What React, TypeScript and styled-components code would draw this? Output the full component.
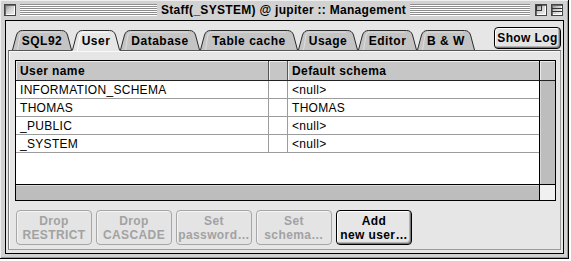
import React from "react";
import styled, { createGlobalStyle } from "styled-components";

const Global = createGlobalStyle`
  html, body { margin: 0; padding: 0; background: #ffffff; }
  body { width: 571px; height: 261px; overflow: hidden; }
  *, *::before, *::after { box-sizing: border-box; }
`;

const UI = `"Liberation Sans", Arial, sans-serif`;

const Window = styled.div`
  width: 569px;
  height: 259px;
  background: #d2d2d2;
  border-right: 1px solid #000;
  border-bottom: 1px solid #000;
  box-shadow: inset 1px 1px 0 #eeeeee, inset -1px -1px 0 #9a9a9a;
  display: flex;
  flex-direction: column;
  padding: 0 4px 4px 5px;
`;

const TitleBar = styled.div`
  height: 20px;
  margin-left: -5px;
  margin-right: -4px;
  padding: 0 5px 0 4px;
  display: grid;
  grid-template-columns: 1fr auto 1fr;
  align-items: center;
  font: bold 12px ${UI};
  letter-spacing: 0.3px;
  color: #000;
`;

const TitleSide = styled.div`
  display: flex;
  align-items: center;
  gap: 4px;
`;

const Stripes = styled.div`
  flex: 1;
  height: 12px;
  background: repeating-linear-gradient(
    to bottom,
    #8e8e8e 0px,
    #8e8e8e 1px,
    #ffffff 1px,
    #ffffff 2px
  );
`;

const TitleText = styled.div`
  padding: 0 4px;
  white-space: nowrap;
`;

const WinBox = styled.div`
  width: 12px;
  height: 12px;
  border: 1px solid #444;
  background: linear-gradient(135deg, #8a8a8a 0%, #cfcfcf 45%, #f4f4f4 100%);
  box-shadow: inset 1px 1px 0 #6a6a6a, inset -1px -1px 0 #fff;
  position: relative;
  flex: none;
`;

const BoxGlyph = styled.svg`
  position: absolute;
  left: 0;
  top: 0;
`;

const Content = styled.div`
  flex: 1;
  border: 1px solid #000;
  background: #e6e6e6;
  display: flex;
  flex-direction: column;
`;

const TabBar = styled.div`
  height: 29px;
  display: flex;
  align-items: flex-end;
  padding-left: 6px;
  padding-right: 2px;
`;

const Tabs = styled.div`
  display: flex;
  align-items: flex-end;
  flex: 1;
`;

const TabItem = styled.div<{ $w: number; $active?: boolean }>`
  position: relative;
  width: ${(p) => p.$w}px;
  height: ${(p) => (p.$active ? 22 : 21)}px;
  margin-bottom: ${(p) => (p.$active ? -1 : 0)}px;
  z-index: ${(p) => (p.$active ? 3 : 1)};
  display: flex;
  justify-content: center;
  padding-top: 6px;
  font: bold 12px ${UI};
  letter-spacing: 0.5px;
  color: #000;
  white-space: nowrap;
`;

const TabSvg = styled.svg`
  position: absolute;
  left: 0;
  top: 0;
  overflow: visible;
`;

const TabLabel = styled.span`
  position: relative;
  line-height: 13px;
`;

const ShowLog = styled.button`
  align-self: flex-start;
  margin-top: 6px;
  width: 67px;
  height: 22px;
  border: 1px solid #000;
  border-radius: 4px;
  background: #e4e4e4;
  box-shadow: inset 1px 1px 0 #fff, inset -1px -1px 0 #777, inset -2px -2px 0 #b4b4b4;
  font: bold 12px ${UI};
  letter-spacing: 0.4px;
  color: #000;
  padding: 0;
`;

const Panel = styled.div`
  position: relative;
  z-index: 2;
  height: 200px;
  margin: 0 2px;
  border: 1px solid;
  border-color: #555 #9a9a9a #9a9a9a #7a7a7a;
  background: #e6e6e6;
  box-shadow: inset 1px 1px 0 #fafafa;
  padding: 9px 4px 4px 6px;
  display: flex;
  flex-direction: column;
  gap: 9px;
`;

const Table = styled.div`
  width: 541px;
  height: 142px;
  border: 1px solid #000;
  display: grid;
  grid-template-columns: 1fr 16px;
  grid-template-rows: 20px 1fr 16px;
  background: #fff;
`;

const HeaderRow = styled.div`
  display: grid;
  grid-template-columns: 253px 19px 1fr;
  border-bottom: 1px solid #222;
  background: #c6c6c6;
`;

const HeaderCell = styled.div<{ $last?: boolean }>`
  border-right: ${(p) => (p.$last ? "none" : "1px solid #555")};
  box-shadow: inset 1px 1px 0 #ececec;
  padding-left: 4px;
  display: flex;
  align-items: center;
  font: bold 12px ${UI};
  letter-spacing: 0.4px;
  color: #000;
  white-space: nowrap;
`;

const HeaderCorner = styled.div`
  border-left: 1px solid #000;
  border-bottom: 1px solid #222;
  background: #c6c6c6;
  box-shadow: inset 1px 1px 0 #ececec;
`;

const Body = styled.div`
  background: #fff;
  display: flex;
  flex-direction: column;
`;

const Row = styled.div`
  height: 18px;
  display: grid;
  grid-template-columns: 253px 19px 1fr;
  border-bottom: 1px solid #9c9c9c;
`;

const Cell = styled.div<{ $last?: boolean }>`
  border-right: ${(p) => (p.$last ? "none" : "1px solid #9c9c9c")};
  padding-left: 4px;
  display: flex;
  align-items: center;
  font: 12px ${UI};
  letter-spacing: 0.3px;
  color: #000;
  white-space: nowrap;
`;

const VScroll = styled.div`
  border-left: 1px solid #000;
  background: #bdbdbd;
  box-shadow: inset 1px 0 0 #d8d8d8;
`;

const HScroll = styled.div`
  border-top: 1px solid #000;
  background: #bdbdbd;
  box-shadow: inset 0 1px 0 #d8d8d8;
`;

const Corner = styled.div`
  border-left: 1px solid #000;
  border-top: 1px solid #000;
  background-color: #f0f0f0;
  background-image: radial-gradient(#d6d6d6 0.6px, transparent 0.7px);
  background-size: 2px 2px;
`;

const ButtonRow = styled.div`
  display: flex;
  gap: 4px;
  padding-left: 1px;
`;

const PushButton = styled.button<{ $off?: boolean }>`
  width: 76px;
  height: 35px;
  border: 1px solid ${(p) => (p.$off ? "#a6a6a6" : "#000")};
  border-radius: 4px;
  background: ${(p) => (p.$off ? "#e4e4e4" : "#e6e6e6")};
  box-shadow: ${(p) =>
    p.$off
      ? "inset 1px 1px 0 #f4f4f4"
      : "inset 1px 1px 0 #fff, inset -1px -1px 0 #777, inset -2px -2px 0 #b4b4b4"};
  color: ${(p) => (p.$off ? "#a2a2a2" : "#000")};
  font: bold 12px/14px ${UI};
  letter-spacing: 0.4px;
  padding: 0;
  white-space: pre-line;
`;

const TabShape: React.FC<{ w: number; active?: boolean }> = ({ w, active }) => {
  const h = 21;
  const d = `M0.5 ${h} L4.5 6 Q6 1.5 10.5 1.5 L${w - 10.5} 1.5 Q${w - 6} 1.5 ${w - 4.5} 6 L${w - 0.5} ${h}`;
  return (
    <TabSvg width={w} height={h + 1}>
      <path
        d={active ? d + ` L${w - 0.5} ${h + 1} L0.5 ${h + 1} Z` : d + " Z"}
        fill={active ? "#e6e6e6" : "#c4c4c4"}
        stroke="none"
      />
      {!active && (
        <path
          d={`M5.5 ${h} L8 6 Q9 3 12 3 L${w - 12} 3`}
          fill="none"
          stroke="#dedede"
          strokeWidth={1}
        />
      )}
      {active && (
        <path d={`M5.5 ${h + 1} L8 6 Q9 3 12 3 L${w - 12} 3`} fill="none" stroke="#fff" strokeWidth={1} />
      )}
      <path d={d} fill="none" stroke="#2a2a2a" strokeWidth={1} />
    </TabSvg>
  );
};

const tabs: { label: string; w: number; active?: boolean }[] = [
  { label: "SQL92", w: 60 },
  { label: "User", w: 48, active: true },
  { label: "Database", w: 80 },
  { label: "Table cache", w: 98 },
  { label: "Usage", w: 60 },
  { label: "Editor", w: 59 },
  { label: "B & W", w: 58 },
];

const users = [
  ["INFORMATION_SCHEMA", "<null>"],
  ["THOMAS", "THOMAS"],
  ["_PUBLIC", "<null>"],
  ["_SYSTEM", "<null>"],
];

const buttons: { label: string; off?: boolean }[] = [
  { label: "Drop\nRESTRICT", off: true },
  { label: "Drop\nCASCADE", off: true },
  { label: "Set\npassword…", off: true },
  { label: "Set\nschema…", off: true },
  { label: "Add\nnew user…" },
];

export default function App() {
  return (
    <>
      <Global />
      <Window>
        <TitleBar>
          <TitleSide>
            <WinBox />
            <Stripes />
          </TitleSide>
          <TitleText>Staff(_SYSTEM) @ jupiter :: Management</TitleText>
          <TitleSide>
            <Stripes />
            <WinBox style={{ marginLeft: 1 }}>
              <BoxGlyph width="10" height="10" viewBox="0 0 10 10">
                <rect x="0.5" y="0.5" width="5" height="5" fill="none" stroke="#333" />
              </BoxGlyph>
            </WinBox>
            <WinBox>
              <BoxGlyph width="10" height="10" viewBox="0 0 10 10">
                <line x1="0" y1="3.5" x2="10" y2="3.5" stroke="#333" />
                <line x1="0" y1="6.5" x2="10" y2="6.5" stroke="#333" />
              </BoxGlyph>
            </WinBox>
          </TitleSide>
        </TitleBar>
        <Content>
          <TabBar>
            <Tabs>
              {tabs.map((t) => (
                <TabItem key={t.label} $w={t.w} $active={t.active}>
                  <TabShape w={t.w} active={t.active} />
                  <TabLabel>{t.label}</TabLabel>
                </TabItem>
              ))}
            </Tabs>
            <ShowLog>Show Log</ShowLog>
          </TabBar>
          <Panel>
            <Table>
              <HeaderRow>
                <HeaderCell>User name</HeaderCell>
                <HeaderCell />
                <HeaderCell $last>Default schema</HeaderCell>
              </HeaderRow>
              <HeaderCorner />
              <Body>
                {users.map(([name, schema]) => (
                  <Row key={name}>
                    <Cell>{name}</Cell>
                    <Cell />
                    <Cell $last>{schema}</Cell>
                  </Row>
                ))}
              </Body>
              <VScroll />
              <HScroll />
              <Corner />
            </Table>
            <ButtonRow>
              {buttons.map((b) => (
                <PushButton key={b.label} $off={b.off}>
                  {b.label}
                </PushButton>
              ))}
            </ButtonRow>
          </Panel>
        </Content>
      </Window>
    </>
  );
}
